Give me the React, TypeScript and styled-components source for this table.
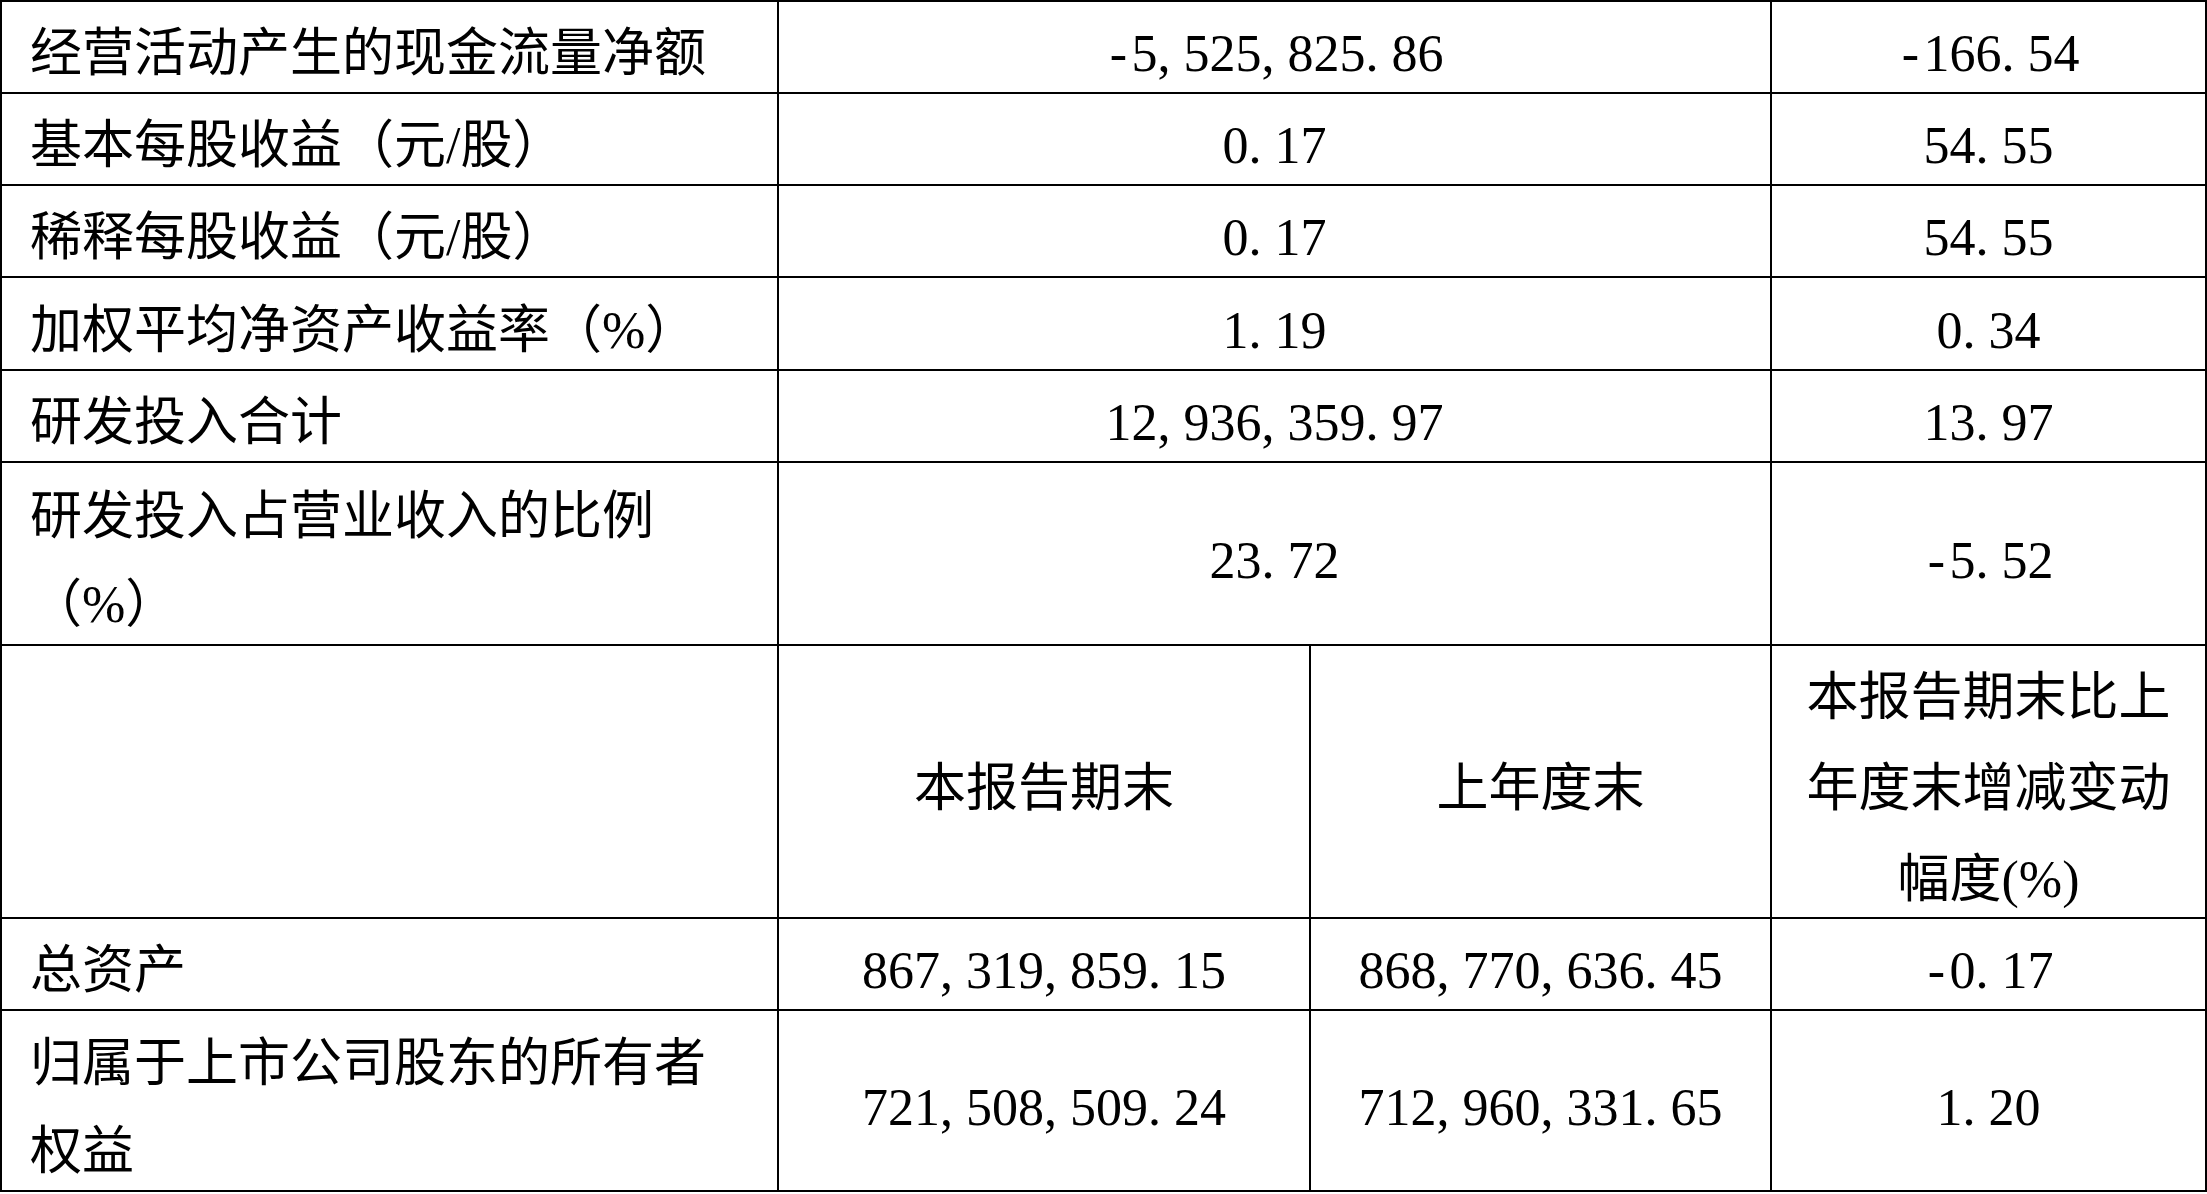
import React from 'react';
import styled, { createGlobalStyle } from 'styled-components';

const GlobalStyle = createGlobalStyle`
  html, body {
    margin: 0;
    padding: 0;
    background: #fff;
  }
  body {
    font-family: "Liberation Serif", "Noto Sans CJK SC", serif;
    color: #000;
  }
`;

const Sheet = styled.div`
  display: grid;
  grid-template-columns: 777px 532px 461px 435px;
  grid-template-rows: 92px 92px 92px 93px 92px 183px 273px 92px 181px;
  width: 2207px;
  box-sizing: border-box;
  border-top: 2px solid #000;
  border-left: 2px solid #000;
  font-size: 52px;
`;

const Cell = styled.div<{ $span?: number; $left?: boolean; $lh?: number }>`
  grid-column: span ${(p) => p.$span ?? 1};
  box-sizing: border-box;
  border-right: 2px solid #000;
  border-bottom: 2px solid #000;
  display: flex;
  align-items: center;
  justify-content: ${(p) => (p.$left ? 'flex-start' : 'center')};
  text-align: ${(p) => (p.$left ? 'left' : 'center')};
  padding: 14px 28px 0;
  line-height: ${(p) => p.$lh ?? 88}px;
  overflow: visible;
`;

// half-width cell for punctuation so numbers keep the fixed-pitch look
const Glyph = styled.span<{ $center?: boolean }>`
  display: inline-block;
  width: 0.5em;
  text-align: ${(p) => (p.$center ? 'center' : 'left')};
`;

const Num: React.FC<{ value: string }> = ({ value }) => (
  <span>
    {value.split('').map((ch, i) =>
      /[0-9]/.test(ch) ? (
        <React.Fragment key={i}>{ch}</React.Fragment>
      ) : (
        <Glyph key={i} $center={ch === '-'}>
          {ch}
        </Glyph>
      ),
    )}
  </span>
);

const topRows: [string, string, string][] = [
  ['经营活动产生的现金流量净额', '-5,525,825.86', '-166.54'],
  ['基本每股收益（元/股）', '0.17', '54.55'],
  ['稀释每股收益（元/股）', '0.17', '54.55'],
  ['加权平均净资产收益率（%）', '1.19', '0.34'],
  ['研发投入合计', '12,936,359.97', '13.97'],
  ['研发投入占营业收入的比例（%）', '23.72', '-5.52'],
];

const bottomRows: [string, string, string, string][] = [
  ['总资产', '867,319,859.15', '868,770,636.45', '-0.17'],
  ['归属于上市公司股东的所有者权益', '721,508,509.24', '712,960,331.65', '1.20'],
];

export default function App() {
  return (
    <>
      <GlobalStyle />
      <Sheet>
        {topRows.map(([label, current, change]) => (
          <React.Fragment key={label}>
            <Cell $left>{label}</Cell>
            <Cell $span={2}>
              <Num value={current} />
            </Cell>
            <Cell>
              <Num value={change} />
            </Cell>
          </React.Fragment>
        ))}

        <Cell $left />
        <Cell>本报告期末</Cell>
        <Cell>上年度末</Cell>
        <Cell $lh={91}>本报告期末比上年度末增减变动幅度(%)</Cell>

        {bottomRows.map(([label, current, lastYear, change]) => (
          <React.Fragment key={label}>
            <Cell $left>{label}</Cell>
            <Cell>
              <Num value={current} />
            </Cell>
            <Cell>
              <Num value={lastYear} />
            </Cell>
            <Cell>
              <Num value={change} />
            </Cell>
          </React.Fragment>
        ))}
      </Sheet>
    </>
  );
}
